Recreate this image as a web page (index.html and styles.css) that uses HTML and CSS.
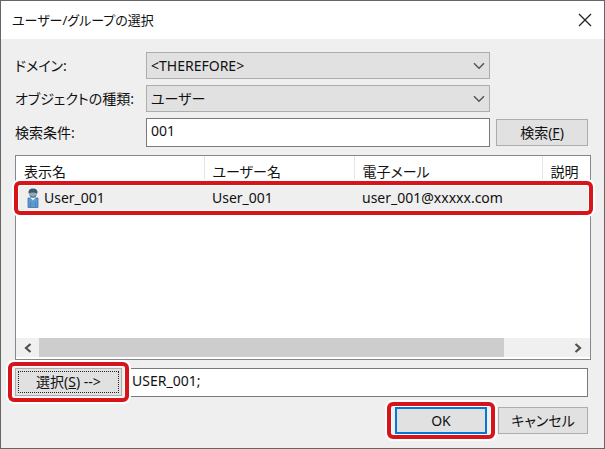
FILE: index.html
```html
<!DOCTYPE html>
<html lang="ja">
<head>
<meta charset="utf-8">
<title>ユーザー/グループの選択</title>
<link rel="stylesheet" href="styles.css">
</head>
<body>
<main class="dialog">
  <header class="titlebar">
    <h1 class="title">ユーザー/グループの選択</h1>
    <button class="close" type="button" aria-label="閉じる">
      <svg width="14" height="14" viewBox="0 0 14 14"><path d="M1 1L13 13M13 1L1 13" fill="none" stroke="#222" stroke-width="1.3"/></svg>
    </button>
  </header>
  <form class="content">
    <div class="criteria">
      <label for="domain">ドメイン:</label>
      <div class="combo">
        <select id="domain"><option>&lt;THEREFORE&gt;</option></select>
        <svg class="chevron" width="12" height="8" viewBox="0 0 12 8"><path d="M1 1.2L6 6.2L11 1.2" fill="none" stroke="#555" stroke-width="1.5"/></svg>
      </div>
      <label for="kind">オブジェクトの種類:</label>
      <div class="combo">
        <select id="kind"><option>ユーザー</option></select>
        <svg class="chevron" width="12" height="8" viewBox="0 0 12 8"><path d="M1 1.2L6 6.2L11 1.2" fill="none" stroke="#555" stroke-width="1.5"/></svg>
      </div>
      <label for="term">検索条件:</label>
      <input id="term" class="field" type="text" value="001">
      <button class="button" type="button">検索(<u>F</u>)</button>
    </div>

    <div class="list">
      <table>
        <colgroup><col class="col-name"><col class="col-user"><col><col class="col-note"></colgroup>
        <thead>
          <tr><th>表示名</th><th>ユーザー名</th><th>電子メール</th><th>説明</th></tr>
        </thead>
        <tbody>
          <tr>
            <td><span class="person"><svg width="12" height="20" viewBox="0 0 12 20"><path d="M1 10H11V19.500H1Z" fill="#5b9bd5" stroke="#41719c" stroke-width=".8"/><path d="M3.500 14V19M8.500 14V19" stroke="#41719c" stroke-width=".6"/><path d="M3.500 10L6 12.500L8.500 10Z" fill="#e8eef4"/><circle cx="6" cy="5" r="4" fill="#8fa9b8"/><path d="M1.500 5.500Q1 .5 6 .5T10.500 5.500Q6 3.500 1.500 5.500Z" fill="#3c5a70"/><path d="M2.500 7Q6 10.500 9.500 7Q9 9.500 6 9.500T2.500 7Z" fill="#3c5a70"/></svg>User_001</span></td>
            <td>User_001</td>
            <td>user_001@xxxxx.com</td>
            <td></td>
          </tr>
        </tbody>
      </table>
      <div class="scrollbar">
        <button type="button" aria-label="左へ"><svg width="9" height="10" viewBox="0 0 9 10"><path d="M7.500 1L3 5L7.500 9" fill="none" stroke="#505050" stroke-width="2.200"/></svg></button>
        <div class="track"><div class="thumb"></div></div>
        <button type="button" aria-label="右へ"><svg width="9" height="10" viewBox="0 0 9 10"><path d="M1.500 1L6 5L1.500 9" fill="none" stroke="#505050" stroke-width="2.200"/></svg></button>
      </div>
    </div>

    <div class="selection">
      <button class="button pick" type="button">選択(<u>S</u>) --&gt;</button>
      <input class="field" type="text" value="USER_001;" aria-label="選択されたユーザー">
    </div>

    <footer class="actions">
      <button class="button primary" type="button">OK</button>
      <button class="button" type="button">キャンセル</button>
    </footer>
  </form>
</main>
</body>
</html>
```
FILE: styles.css
```css
* { box-sizing: border-box; }

body {
  margin: 0;
  min-height: 100vh;
  display: flex;
  padding: 1px;
  background: #666;
  font-family: "Noto Sans", "Noto Sans CJK JP", sans-serif;
  font-size: 14px;
  line-height: 20px;
  color: #111;
}

button, input, select {
  font: inherit;
  color: inherit;
  border-radius: 0;
  margin: 0;
}

button { padding: 0; }

.dialog {
  flex: 1;
  display: flex;
  flex-direction: column;
  background: #efefef;
}

.titlebar {
  display: flex;
  align-items: center;
  justify-content: space-between;
  height: 38px;
  padding: 0 12px 0 11px;
  background: #fff;
}

.title {
  margin: 0;
  font-size: 13px;
  font-weight: 400;
  font-feature-settings: "palt";
}

.close {
  display: flex;
  border: 0;
  background: none;
}

.content {
  flex: 1;
  display: flex;
  flex-direction: column;
  padding: 13px 16px 0 14px;
}

.criteria {
  display: grid;
  grid-template-columns: 125px 1fr 92px;
  grid-template-rows: 27px 27px 29px;
  gap: 6px;
  align-items: center;
}

.criteria label {
  grid-column: 1;
  white-space: nowrap;
  font-feature-settings: "palt";
}

.combo {
  position: relative;
  height: 100%;
}

.combo select {
  appearance: none;
  width: 100%;
  height: 100%;
  padding: 0 24px 0 4px;
  border: 1px solid #adadad;
  background: #e1e1e1;
  font-feature-settings: "palt";
}

.chevron {
  position: absolute;
  right: 5px;
  top: 10px;
  pointer-events: none;
}

.field {
  width: 100%;
  min-width: 0;
  height: 29px;
  padding: 0 4px 4px;
  border: 1px solid #7a7a7a;
  background: #fff;
}

.button {
  height: 27px;
  border: 1px solid #adadad;
  background: #e1e1e1;
  white-space: nowrap;
  font-feature-settings: "palt";
}

.list {
  display: flex;
  flex-direction: column;
  justify-content: space-between;
  height: 205px;
  margin: 8px -3px 0 0;
  padding-bottom: 2px;
  border: 1px solid #828790;
  background: #fff;
}

table {
  width: 100%;
  table-layout: fixed;
  border-collapse: collapse;
}

.col-name { width: 188px; }
.col-user { width: 150px; }
.col-note { width: 48px; }

th, td {
  padding: 0 0 0 8px;
  text-align: left;
  font-weight: 400;
  white-space: nowrap;
}

th {
  height: 30px;
  padding-top: 2px;
  border-right: 1px solid #e5e5e5;
  font-feature-settings: "palt";
}

th:last-child { border-right: 0; }

tbody tr {
  position: relative;
  background: #efefef;
}

td { height: 24px; }

.person {
  display: flex;
  align-items: center;
  gap: 5px;
  padding-left: 3px;
}

.pick, .primary { position: relative; }

td:first-child::after,
.pick::after,
.primary::after {
  content: "";
  position: absolute;
  inset: -5px -3px -5px -2px;
  border: 4px solid #d7141a;
  border-radius: 6px;
  box-shadow: 0 0 0 2px #fff, inset 0 0 0 1px #fff;
  pointer-events: none;
}

.scrollbar {
  display: flex;
  height: 19px;
  background: #f0f0f0;
}

.scrollbar button {
  display: flex;
  align-items: center;
  justify-content: center;
  width: 23px;
  border: 0;
  background: none;
}

.track { flex: 1; }

.thumb {
  width: 88%;
  height: 100%;
  background: #cdcdcd;
}

.selection {
  display: grid;
  grid-template-columns: 107px 1fr;
  gap: 5px;
  margin-top: 8px;
}

.pick {
  height: 28px;
  outline: 1px dotted #222;
  outline-offset: -4px;
}

.selection .pick::after { inset: -7px -8px; }

.actions {
  display: grid;
  grid-template-columns: 92px 90px;
  justify-content: end;
  gap: 11px;
  margin-top: 10px;
}

.primary { border: 2px solid #0078d7; }

.actions .primary::after { inset: -7px -10px; }
```
